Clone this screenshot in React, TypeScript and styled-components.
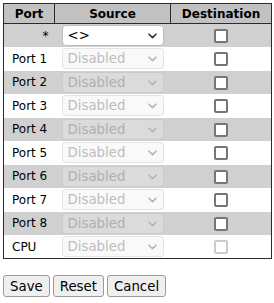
import styled, { createGlobalStyle } from "styled-components";

const GlobalStyle = createGlobalStyle`
  html, body {
    margin: 0;
    padding: 0;
    background: #fff;
  }
  body {
    font-family: "DejaVu Sans", Verdana, sans-serif;
    font-size: 12px;
    color: #000;
  }
`;

const Page = styled.div`
  padding: 3px;
`;

const Table = styled.table`
  width: 268px;
  border-collapse: collapse;
  border: 1px solid #2b2b2b;
  table-layout: fixed;
`;

const HeadCell = styled.th`
  height: 19px;
  padding: 0;
  background: #c2c2c2;
  border: 1px solid #2b2b2b;
  font-weight: bold;
  font-size: 12px;
  text-align: center;
`;

const Row = styled.tr<{ $shade: boolean }>`
  height: 23.5px;
  background: ${(p) => (p.$shade ? "#d0d0d0" : "#ffffff")};
`;

const PortCell = styled.td<{ $right?: boolean }>`
  padding: 0 6px 0 8px;
  text-align: ${(p) => (p.$right ? "right" : "left")};
  white-space: nowrap;
`;

const SourceCell = styled.td`
  padding: 0 0 0 7px;
`;

const CenterCell = styled.td`
  padding: 0;
  text-align: center;
`;

const SelectWrap = styled.span`
  position: relative;
  display: inline-block;
  vertical-align: middle;
  line-height: 0;
`;

const Select = styled.select`
  appearance: none;
  width: 102px;
  height: 21px;
  margin: 0;
  padding: 0 20px 0 5px;
  border: 1px solid #bdbdbd;
  border-radius: 4px;
  background: #ffffff;
  color: #000;
  font-family: "DejaVu Sans", Verdana, sans-serif;
  font-size: 13.33px;

  &:disabled {
    border-color: rgba(150, 150, 150, 0.3);
    background: rgba(239, 239, 239, 0.5);
    color: #a2a2a2;
  }
`;

const Chevron = styled.svg<{ $off?: boolean }>`
  position: absolute;
  right: 7px;
  top: 8px;
  width: 9px;
  height: 6px;
  pointer-events: none;
  stroke: ${(p) => (p.$off ? "#b4b4b4" : "#333333")};
`;

const Check = styled.input`
  appearance: none;
  box-sizing: border-box;
  width: 14px;
  height: 14px;
  margin: 0;
  vertical-align: middle;
  border: 2px solid #767676;
  border-radius: 2px;
  background: #fff;

  &:disabled {
    border-color: #cbcbcb;
  }
`;

const Actions = styled.div`
  margin-top: 16px;
  display: flex;
  gap: 3px;
`;

const Button = styled.button`
  height: 22px;
  padding: 0 6px;
  border: 1px solid #9a9a9a;
  border-radius: 3px;
  background: #efefef;
  color: #000;
  font-family: "DejaVu Sans", Verdana, sans-serif;
  font-size: 13.33px;
`;

const ports = ["Port 1", "Port 2", "Port 3", "Port 4", "Port 5", "Port 6", "Port 7", "Port 8", "CPU"];

const ChevronIcon = ({ off }: { off?: boolean }) => (
  <Chevron $off={off} viewBox="0 0 9 6" fill="none" strokeWidth="1.6" strokeLinecap="round" strokeLinejoin="round">
    <path d="M1 1.2 L4.5 4.6 L8 1.2" />
  </Chevron>
);

export default function App() {
  return (
    <Page>
      <GlobalStyle />
      <Table>
        <colgroup>
          <col style={{ width: 51 }} />
          <col style={{ width: 116 }} />
          <col style={{ width: 101 }} />
        </colgroup>
        <thead>
          <tr>
            <HeadCell>Port</HeadCell>
            <HeadCell>Source</HeadCell>
            <HeadCell>Destination</HeadCell>
          </tr>
        </thead>
        <tbody>
          <Row $shade>
            <PortCell $right>*</PortCell>
            <SourceCell>
              <SelectWrap>
                <Select defaultValue="any">
                  <option value="any">&lt;&gt;</option>
                  <option value="disabled">Disabled</option>
                  <option value="both">Both</option>
                  <option value="rx">Rx only</option>
                  <option value="tx">Tx only</option>
                </Select>
                <ChevronIcon />
              </SelectWrap>
            </SourceCell>
            <CenterCell>
              <Check type="checkbox" />
            </CenterCell>
          </Row>
          {ports.map((name, i) => (
            <Row key={name} $shade={i % 2 === 1}>
              <PortCell>{name}</PortCell>
              <SourceCell>
                <SelectWrap>
                  <Select disabled defaultValue="disabled">
                    <option value="disabled">Disabled</option>
                  </Select>
                  <ChevronIcon off />
                </SelectWrap>
              </SourceCell>
              <CenterCell>
                <Check type="checkbox" disabled={name === "CPU"} />
              </CenterCell>
            </Row>
          ))}
        </tbody>
      </Table>
      <Actions>
        <Button type="button">Save</Button>
        <Button type="button">Reset</Button>
        <Button type="button">Cancel</Button>
      </Actions>
    </Page>
  );
}
